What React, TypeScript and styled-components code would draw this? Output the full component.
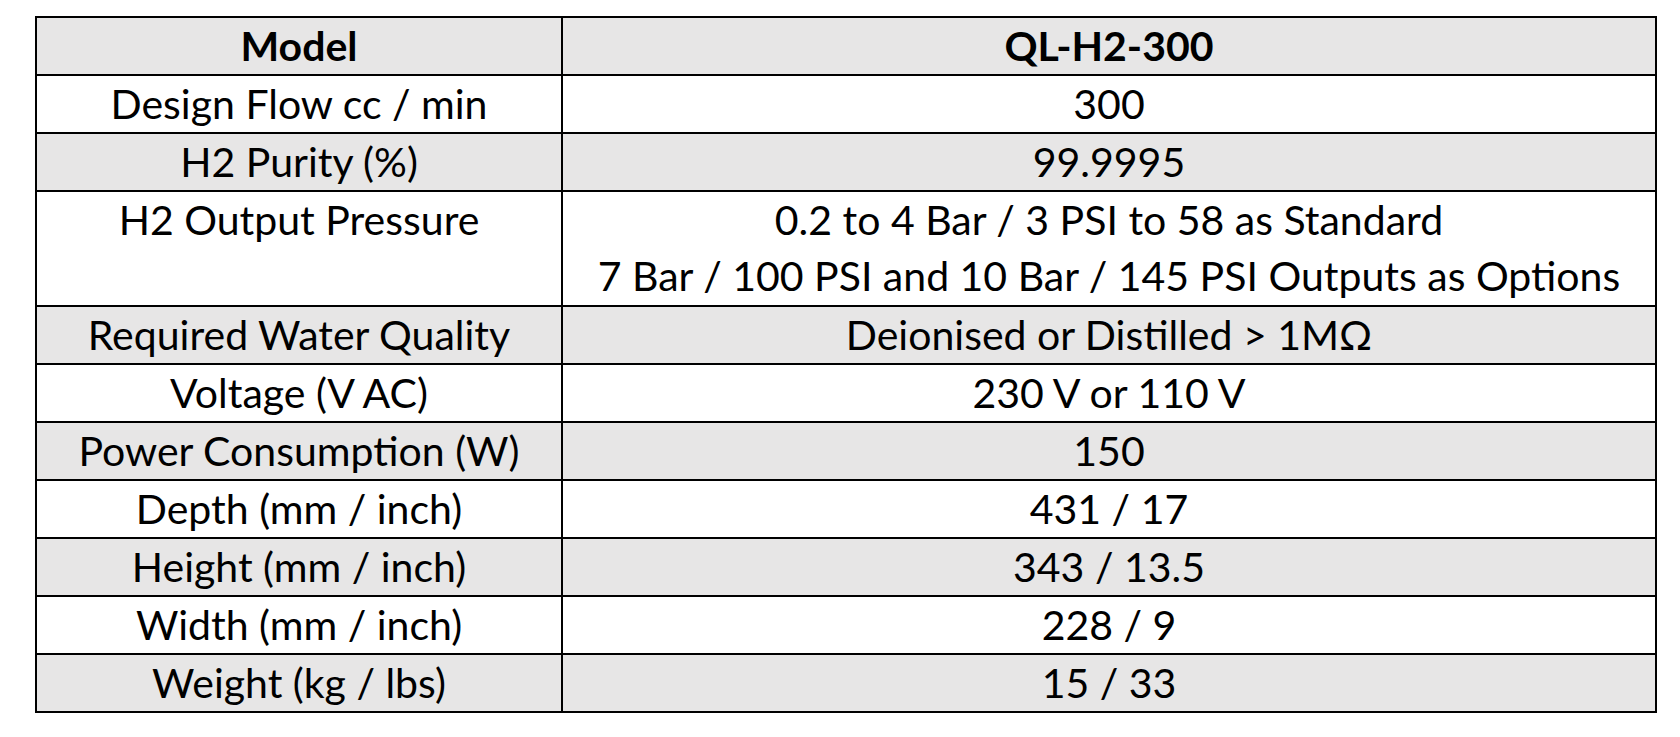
import React from "react";
import styled, { createGlobalStyle } from "styled-components";

const GlobalStyle = createGlobalStyle`
  html, body {
    margin: 0;
    padding: 0;
    background: #ffffff;
  }
  body {
    font-family: Lato, "Open Sans", "Liberation Sans", sans-serif;
    color: #000000;
  }
`;

const Page = styled.div`
  padding: 16px 0 0 35px;
`;

const SpecTable = styled.div`
  display: grid;
  grid-template-columns: 526px 1094px;
  width: max-content;
  border-top: 2px solid #000;
  border-left: 2px solid #000;
`;

const Cell = styled.div<{ $shade: boolean; $bold?: boolean; $tall?: boolean }>`
  box-sizing: border-box;
  height: ${(p) => (p.$tall ? "115px" : "58px")};
  border-right: 2px solid #000;
  border-bottom: 2px solid #000;
  background: ${(p) => (p.$shade ? "#e7e6e6" : "#ffffff")};
  display: flex;
  flex-direction: column;
  align-items: center;
  justify-content: flex-start;
  font-size: 41px;
  line-height: 56px;
  font-weight: ${(p) => (p.$bold ? 700 : 400)};
  white-space: nowrap;
  text-align: center;
`;

const Line = styled.span`
  display: block;
`;

type Row = { label: string; value: string[]; bold?: boolean };

const rows: Row[] = [
  { label: "Model", value: ["QL-H2-300"], bold: true },
  { label: "Design Flow cc / min", value: ["300"] },
  { label: "H2 Purity (%)", value: ["99.9995"] },
  {
    label: "H2 Output Pressure",
    value: [
      "0.2 to 4 Bar / 3 PSI to 58 as Standard",
      "7 Bar / 100 PSI and 10 Bar / 145 PSI Outputs as Options",
    ],
  },
  { label: "Required Water Quality", value: ["Deionised or Distilled > 1MΩ"] },
  { label: "Voltage (V AC)", value: ["230 V or 110 V"] },
  { label: "Power Consumption (W)", value: ["150"] },
  { label: "Depth (mm / inch)", value: ["431 / 17"] },
  { label: "Height (mm / inch)", value: ["343 / 13.5"] },
  { label: "Width (mm / inch)", value: ["228 / 9"] },
  { label: "Weight (kg / lbs)", value: ["15 / 33"] },
];

export default function App() {
  return (
    <>
      <GlobalStyle />
      <Page>
        <SpecTable>
          {rows.map((r, i) => {
            const shade = i % 2 === 0;
            const tall = r.value.length > 1;
            return (
              <React.Fragment key={r.label}>
                <Cell $shade={shade} $bold={r.bold} $tall={tall}>
                  <Line>{r.label}</Line>
                </Cell>
                <Cell $shade={shade} $bold={r.bold} $tall={tall}>
                  {r.value.map((v) => (
                    <Line key={v}>{v}</Line>
                  ))}
                </Cell>
              </React.Fragment>
            );
          })}
        </SpecTable>
      </Page>
    </>
  );
}
